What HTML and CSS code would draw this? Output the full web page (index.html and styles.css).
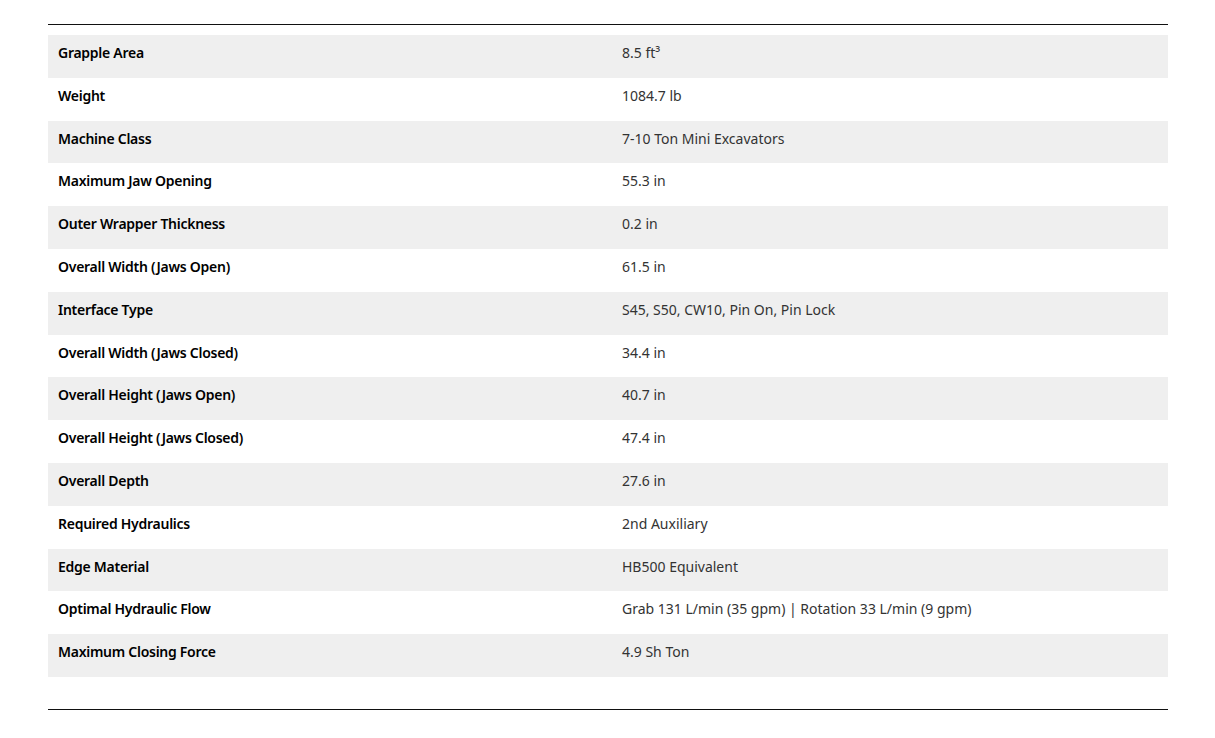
FILE: index.html
```html
<!DOCTYPE html>
<html lang="en">
<head>
<meta charset="utf-8">
<title>Specifications</title>
<link rel="stylesheet" href="styles.css">
</head>
<body>
<section class="specs">
  <div class="rule"></div>
  <div class="table">
    <div class="row"><div class="label">Grapple Area</div><div class="value">8.5 ft³</div></div>
    <div class="row"><div class="label">Weight</div><div class="value">1084.7 lb</div></div>
    <div class="row"><div class="label">Machine Class</div><div class="value">7-10 Ton Mini Excavators</div></div>
    <div class="row"><div class="label">Maximum Jaw Opening</div><div class="value">55.3 in</div></div>
    <div class="row"><div class="label">Outer Wrapper Thickness</div><div class="value">0.2 in</div></div>
    <div class="row"><div class="label">Overall Width (Jaws Open)</div><div class="value">61.5 in</div></div>
    <div class="row"><div class="label">Interface Type</div><div class="value">S45, S50, CW10, Pin On, Pin Lock</div></div>
    <div class="row"><div class="label">Overall Width (Jaws Closed)</div><div class="value">34.4 in</div></div>
    <div class="row"><div class="label">Overall Height (Jaws Open)</div><div class="value">40.7 in</div></div>
    <div class="row"><div class="label">Overall Height (Jaws Closed)</div><div class="value">47.4 in</div></div>
    <div class="row"><div class="label">Overall Depth</div><div class="value">27.6 in</div></div>
    <div class="row"><div class="label">Required Hydraulics</div><div class="value">2nd Auxiliary</div></div>
    <div class="row"><div class="label">Edge Material</div><div class="value">HB500 Equivalent</div></div>
    <div class="row"><div class="label">Optimal Hydraulic Flow</div><div class="value">Grab 131 L/min (35 gpm) | Rotation 33 L/min (9 gpm)</div></div>
    <div class="row"><div class="label">Maximum Closing Force</div><div class="value">4.9 Sh Ton</div></div>
  </div>
  <div class="rule bottom"></div>
</section>
</body>
</html>
```

FILE: styles.css
```css
html, body {
  margin: 0;
  padding: 0;
  background: #ffffff;
}
body {
  font-family: "Noto Sans", "Open Sans", sans-serif;
  font-size: 14px;
  line-height: 20px;
}
.specs {
  width: 1120px;
  margin-left: 48px;
  padding-top: 24px;
}
.rule {
  height: 1px;
  background: #111;
}
.table {
  margin-top: 10px;
}
.rule.bottom {
  margin-top: 32px;
}
.row {
  display: grid;
  grid-template-columns: 564px 1fr;
  height: 42.8px;
  box-sizing: border-box;
  padding-top: 8px;
}
.row:nth-child(odd) {
  background: #efefef;
}
.label {
  padding: 0 10px;
  font-weight: 600;
  color: #000;
  letter-spacing: -0.27px;
}
.value {
  padding: 0 10px;
  color: #333;
}
```
